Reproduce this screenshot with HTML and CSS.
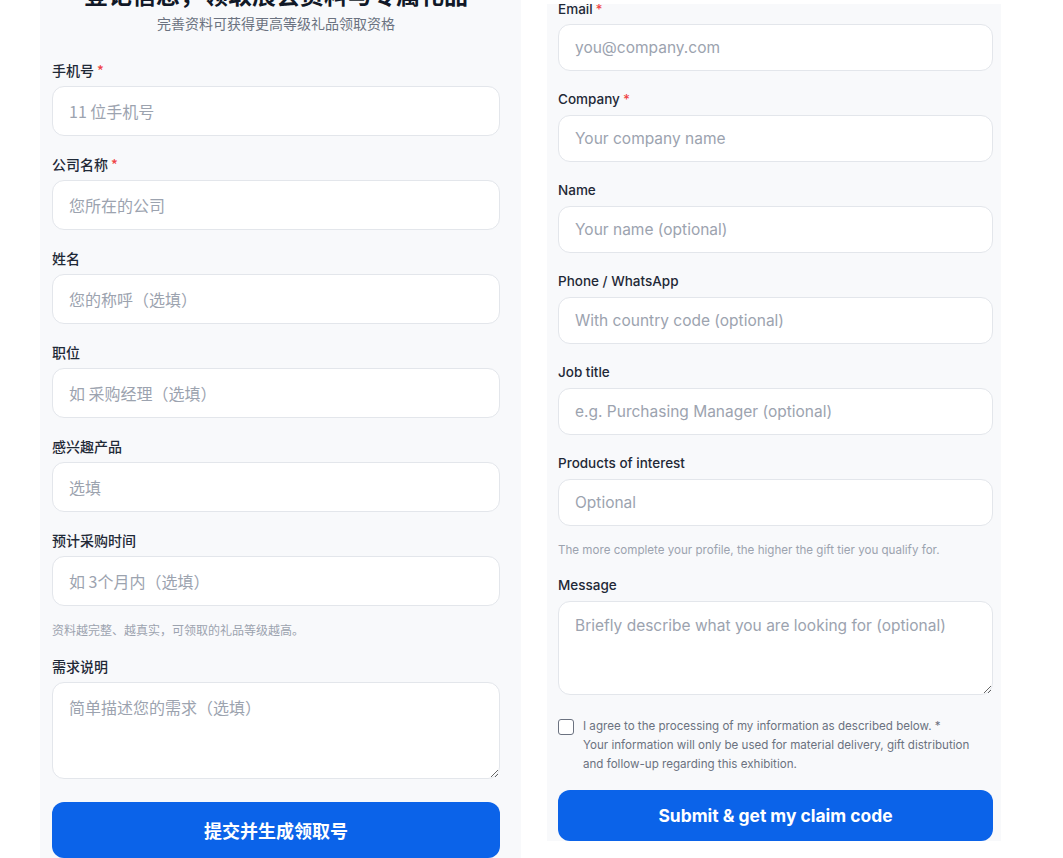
FILE: index.html
```html
<!DOCTYPE html>
<html lang="zh-CN">
<head>
    <meta charset="UTF-8">
    <meta name="viewport" content="width=device-width, initial-scale=1.0">
    <title>展会登记 / Exhibition Registration</title>
    <link rel="stylesheet" href="styles.css">
</head>
<body>
    <div id="page">
        <form class="panel panel-zh">
            <div class="head">
                <h1>登记信息，领取展会资料与专属礼品</h1>
                <p class="sub">完善资料可获得更高等级礼品领取资格</p>
            </div>
            <div class="field">
                <label>手机号<span class="req">*</span></label>
                <input type="text" placeholder="11 位手机号">
            </div>
            <div class="field">
                <label>公司名称<span class="req">*</span></label>
                <input type="text" placeholder="您所在的公司">
            </div>
            <div class="field">
                <label>姓名</label>
                <input type="text" placeholder="您的称呼（选填）">
            </div>
            <div class="field">
                <label>职位</label>
                <input type="text" placeholder="如 采购经理（选填）">
            </div>
            <div class="field">
                <label>感兴趣产品</label>
                <input type="text" placeholder="选填">
            </div>
            <div class="field last">
                <label>预计采购时间</label>
                <input type="text" placeholder="如 3个月内（选填）">
            </div>
            <p class="hint">资料越完整、越真实，可领取的礼品等级越高。</p>
            <div class="field">
                <label>需求说明</label>
                <textarea placeholder="简单描述您的需求（选填）"></textarea>
            </div>
            <button type="button" class="btn">提交并生成领取号</button>
        </form>

        <form class="panel panel-en" lang="en">
            <div class="field first">
                <label>Email<span class="req">*</span></label>
                <input type="email" placeholder="you@company.com">
            </div>
            <div class="field">
                <label>Company<span class="req">*</span></label>
                <input type="text" placeholder="Your company name">
            </div>
            <div class="field">
                <label>Name</label>
                <input type="text" placeholder="Your name (optional)">
            </div>
            <div class="field">
                <label>Phone / WhatsApp</label>
                <input type="text" placeholder="With country code (optional)">
            </div>
            <div class="field">
                <label>Job title</label>
                <input type="text" placeholder="e.g. Purchasing Manager (optional)">
            </div>
            <div class="field last">
                <label>Products of interest</label>
                <input type="text" placeholder="Optional">
            </div>
            <p class="hint">The more complete your profile, the higher the gift tier you qualify for.</p>
            <div class="field">
                <label>Message</label>
                <textarea placeholder="Briefly describe what you are looking for (optional)"></textarea>
            </div>
            <label class="agree">
                <input type="checkbox">
                <span>I agree to the processing of my information as described below. *<br>
                Your information will only be used for material delivery, gift distribution and follow-up regarding this exhibition.</span>
            </label>
            <button type="button" class="btn">Submit &amp; get my claim code</button>
        </form>
    </div>
</body>
</html>
```

FILE: styles.css
```css
* {
    box-sizing: border-box;
}
html, body {
    height: 100%;
}
body {
    margin: 0;
    background: #ffffff;
    font-family: 'Inter', 'Noto Sans CJK SC', sans-serif;
    color: #1f2937;
    overflow: hidden;
}
#page {
    display: flex;
    align-items: flex-start;
    gap: 26px;
    padding-left: 40px;
}
.panel {
    background: #f8f9fb;
    display: flex;
    flex-direction: column;
}
.panel-zh {
    width: 481px;
    margin-top: -22px;
    padding: 0 21px 0 12px;
    min-height: 900px;
    font-family: 'Noto Sans CJK SC', 'Inter', sans-serif;
}
.panel-en {
    width: 454px;
    height: 837px;
    margin-top: 4px;
    padding: 0 8px 0 11px;
    overflow: hidden;
}
.head {
    text-align: center;
    margin-bottom: 27px;
}
.head h1 {
    margin: 0;
    font-size: 24px;
    line-height: 32px;
    font-weight: 700;
    color: #111827;
}
.head .sub {
    margin: 3px 0 0;
    font-size: 14px;
    line-height: 20px;
    color: #6b7280;
}
.field {
    display: flex;
    flex-direction: column;
    margin-bottom: 18px;
}
.field label {
    font-size: 14px;
    line-height: 20px;
    font-weight: 500;
    color: #1f2937;
    margin-bottom: 6px;
}
.req {
    color: #ef4444;
    margin-left: 3px;
}
.field input,
.field textarea {
    width: 100%;
    height: 50px;
    border: 1px solid #e3e6eb;
    border-radius: 12px;
    background: #fff;
    padding: 0 16px;
    font-family: inherit;
    font-size: 16px;
    color: #111827;
    outline: none;
}
.field textarea {
    height: 97px;
    padding: 12px 16px;
    resize: vertical;
    line-height: 24px;
}
::placeholder {
    color: #9ca3af;
}
.field.last {
    margin-bottom: 0;
}
.hint {
    margin: 15px 0 17px;
    font-size: 12px;
    line-height: 18px;
    color: #9ca3af;
}
.btn {
    margin-top: 5px;
    height: 56px;
    border: none;
    border-radius: 12px;
    background: #0b63e9;
    color: #fff;
    font-family: inherit;
    font-size: 18px;
    font-weight: 700;
    cursor: pointer;
}

/* english form is a touch tighter */
.panel-en .field {
    margin-bottom: 19px;
}
.panel-en .field label {
    font-size: 13.5px;
    line-height: 18px;
    margin-bottom: 7px;
}
.panel-en .field.first {
    margin-top: -4px;
}
.panel-en .field.first label {
    margin-bottom: 6px;
}
.panel-en .field input,
.panel-en .field textarea {
    font-size: 15.5px;
}
.panel-en .field input {
    height: 47px;
}
.panel-en .field.last {
    margin-bottom: 0;
}
.panel-en .hint {
    margin: 16px 0 18px;
    font-size: 11.6px;
    line-height: 16px;
}
.panel-en .field textarea {
    height: 94px;
}
.panel-en .field:has(textarea) {
    margin-bottom: 22px;
}
.agree {
    display: flex;
    align-items: flex-start;
    gap: 9px;
    font-size: 11.6px;
    line-height: 19px;
    color: #6b7280;
}
.agree input {
    appearance: none;
    flex: none;
    width: 16px;
    height: 16px;
    margin: 2px 0 0;
    border: 1.5px solid #6b7280;
    border-radius: 3px;
    background: #fff;
}
.panel-en .btn {
    margin-top: 16px;
    height: 51px;
    flex: none;
    font-size: 17.4px;
}
```
